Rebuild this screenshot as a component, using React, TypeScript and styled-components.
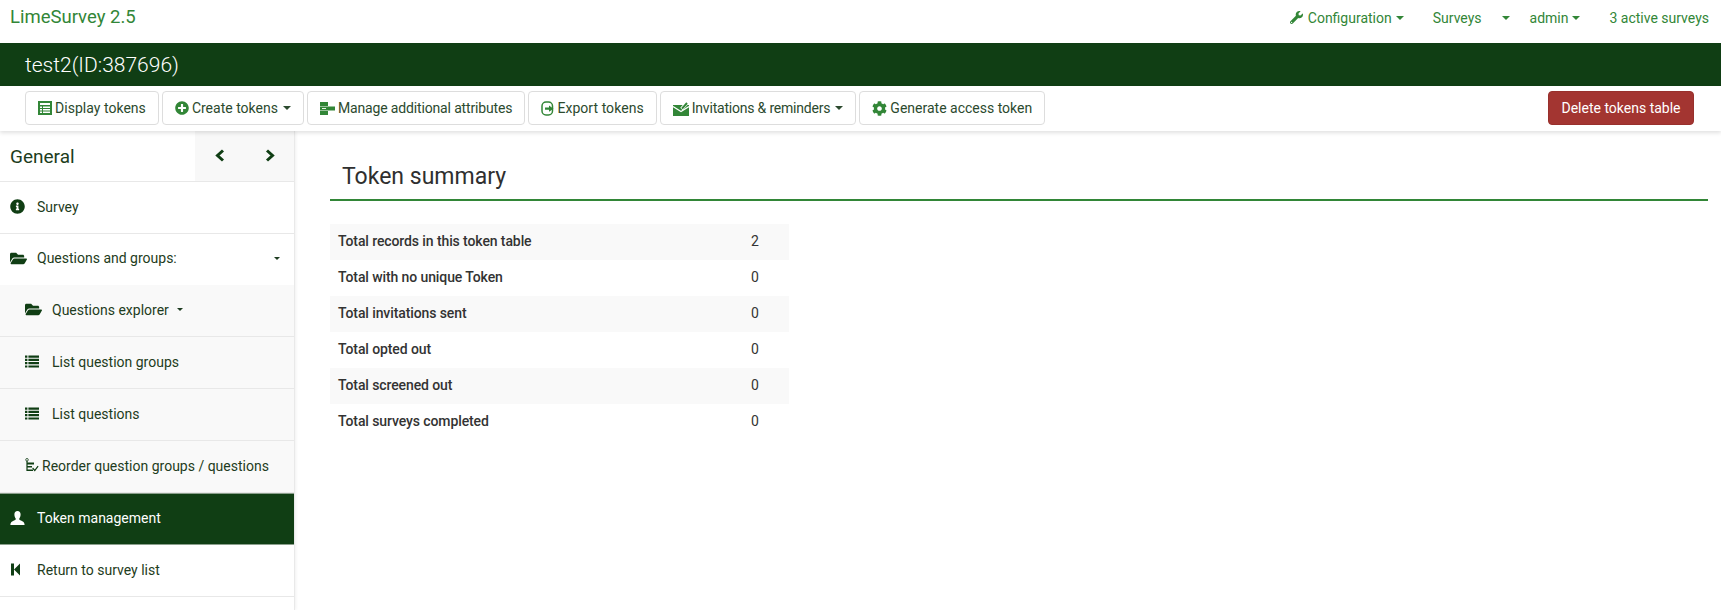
import React from 'react';
import styled, { createGlobalStyle } from 'styled-components';
import { FaWrench, FaPlusCircle, FaInfoCircle, FaFolderOpen, FaCog } from 'react-icons/fa';

const Global = createGlobalStyle`
  html, body { margin: 0; padding: 0; background: #fff; }
  body { font-family: Roboto, "Liberation Sans", sans-serif; font-size: 14px; color: #2d2d2d; }
  * { box-sizing: border-box; }
`;
const Page = styled.div`width: 1721px; height: 610px; overflow: hidden; display: flex; flex-direction: column;`;
const TopNav = styled.header`height: 43px; display: flex; align-items: center; justify-content: space-between; padding: 0 12px 8px 10px; color: #328637; background: #fff;`;
const Brand = styled.span`font-size: 18.5px; margin-bottom: 2px;`;
const NavLinks = styled.nav`display: flex; align-items: center; font-size: 14px;`;
const NavLink = styled.span<{ $ml: number }>`display: inline-flex; align-items: center; gap: 2px; margin-left: ${p => p.$ml}px; svg { margin-right: 3px; }`;
const Caret = styled.i<{ $ml?: number }>`display: inline-block; width: 0; height: 0; margin-left: ${p => p.$ml ?? 2}px; border-top: 4px solid currentColor; border-left: 4px solid transparent; border-right: 4px solid transparent;`;
const Band = styled.div`height: 43px; background: #103e14; color: #fff; font-size: 21px; font-weight: 300; display: flex; align-items: center; padding-left: 25px;`;
const Toolbar = styled.div`height: 45px; display: flex; align-items: center; padding: 0 27px 1px 25px; gap: 3px; box-shadow: 0 2px 4px rgba(0,0,0,.12); position: relative; background: #fff;`;
const ToolButton = styled.button<{ $ls?: number }>`height: 34px; padding: 0 12px; display: inline-flex; align-items: center; gap: 3px; background: #fff; border: 1px solid #ddd; border-radius: 4px; font: 14px Roboto, sans-serif; letter-spacing: ${p => p.$ls ?? 0}px; color: #2c4a2e; white-space: nowrap;
  svg { color: #328637; flex: none; }`;
const DangerButton = styled.button`height: 34px; width: 146px; margin-left: auto; background: #a33531; border: 1px solid #98302c; border-radius: 4px; color: #fff; font: 14px Roboto, sans-serif;`;
const Body = styled.div`flex: 1; display: flex; min-height: 0;`;
const Side = styled.aside`width: 295px; flex: none; border-right: 1px solid #e9e9e9; box-shadow: 1px 0 3px rgba(0,0,0,.06); color: #103e14;`;
const SideHead = styled.div`height: 51px; display: flex; border-bottom: 1px solid #e8e8e8;`;
const SideTitle = styled.div`flex: 1; padding-left: 10px; font-size: 19px; display: flex; align-items: center; color: #1d3d20;`;
const Arrows = styled.div`width: 99px; background: #f8f8f8; display: flex; align-items: center; justify-content: space-between; padding: 0 19px 2px 20px;`;
const Row = styled.div<{ $sub?: boolean; $active?: boolean; $plain?: boolean; $h?: number }>`
  height: ${p => p.$h ?? 52}px; display: flex; align-items: center; font-size: 14px;
  padding-left: ${p => p.$sub ? 25 : 10}px; padding-bottom: ${p => p.$active ? 3 : 2}px;
  background: ${p => p.$active ? '#103e14' : p.$sub ? '#f9f9f9' : '#fff'};
  color: ${p => p.$active ? '#fff' : '#1e3c21'};
  border-bottom: 1px solid ${p => p.$plain ? 'transparent' : p.$active ? '#8b9f8c' : '#e8e8e8'};
  ${p => p.$active ? 'border-top: 1px solid #8b9f8c;' : ''}
`;
const IconCell = styled.span<{ $w?: number }>`width: ${p => p.$w ?? 27}px; flex: none; display: inline-flex; align-items: center; color: #103e14;`;
const ActiveIcon = styled(IconCell)`color: #fff;`;
const RowCaret = styled(Caret)<{ $ml?: number }>`color: #1e3c21; border-width: 3.5px 3.5px 0;`;
const Main = styled.main`flex: 1; padding: 23px 13px 0 35px; min-width: 0; color: #333;`;
const Title = styled.h1`margin: 0; height: 47px; padding: 6px 0 0 12px; font-size: 23px; font-weight: 400; line-height: 34px; border-bottom: 2px solid #328637; color: #2f2f2f;`;
const Summary = styled.table`margin-top: 23px; width: 459px; border-collapse: collapse; font-size: 14px;`;
const SumRow = styled.tr`height: 36px; &:nth-child(odd) { background: #f9f9f9; }`;
const Label = styled.td`padding: 0 8px 2px; font-weight: 500; letter-spacing: -0.1px;`;
const Value = styled.td`width: 38px; padding: 0 0 2px;`;

const Gi = ({ children, w = 15, h = 15 }: { children: React.ReactNode; w?: number; h?: number }) => (
  <svg width={w} height={h} viewBox={`0 0 ${w} ${h}`} fill="currentColor">{children}</svg>
);
const DisplayIcon = () => <Gi w={14} h={14}><path fillRule="evenodd" d="M0 0h14v14H0zM2 2v2h10V2zM2 5.5v1.5h2V5.5zM5 5.5v1.5h7V5.5zM2 8v1.5h2V8zM5 8v1.5h7V8zM2 10.5V12h2v-1.5zM5 10.5V12h7v-1.5z"/></Gi>;
const AttrIcon = () => <Gi w={15} h={15}><path d="M0 1h8v4H0zM0 10h8v4H0zM0 5.6h15v3.8H0z"/><path d="M2 7.1h4v.9H2z" fill="#fff"/></Gi>;
const ExportIcon = () => <Gi w={13} h={15}><rect x="1" y="1" width="10.5" height="13" rx="4" fill="none" stroke="currentColor" strokeWidth="1.5"/><path d="M4 6.6h4V4.6L12.5 7.7 8 10.8V8.8H4z"/></Gi>;
const MailIcon = () => <Gi w={16} h={15}><path d="M0 4h16v11H0z"/><path d="M0 5.5 8 10.5 16 5.5" fill="none" stroke="#fff" strokeWidth="1.2"/><path d="M8.5 8 14 1.8" fill="none" stroke="#fff" strokeWidth="3.4"/><path d="M9 7.6 14 2" fill="none" stroke="currentColor" strokeWidth="2"/></Gi>;
const ReorderIcon = () => <Gi w={14} h={15}><circle cx="2" cy="1.8" r="1.3" fill="none" stroke="currentColor" strokeWidth=".8"/><path d="M1.4 3h1.2v10H1.4zM2.4 4.5H9v2H2.4zM2.4 8H7v1.6H2.4zM2.4 11.5H8V13H2.4z"/><path d="M8 9.5 9.8 11.4 12.6 7.8 13.6 8.6 9.8 13.4 7.2 10.6z"/></Gi>;
const ListIcon = () => <Gi w={14} h={13}><path d="M0 .5h2.4v2.2H0zM3.4.5H14v2.2H3.4zM0 3.8h2.4V6H0zM3.4 3.8H14V6H3.4zM0 7.1h2.4v2.2H0zM3.4 7.1H14v2.2H3.4zM0 10.4h2.4v2.2H0zM3.4 10.4H14v2.2H3.4z"/></Gi>;
const ChevronIcon = ({ right }: { right?: boolean }) => <Gi w={10} h={13}><path d={right ? 'M2 1.5 7.5 6.5 2 11.5' : 'M8 1.5 2.5 6.5 8 11.5'} fill="none" stroke="currentColor" strokeWidth="3"/></Gi>;
const UserIcon = () => <Gi w={15} h={14}><path d="M7.5 0C9.5 0 10.6 1.4 10.6 3.4 10.6 5.4 9.7 6.8 9.3 7.6 9 8.6 9.6 9 10.8 9.6 12.4 10.4 14.4 10.8 14.6 14H.4C.6 10.8 2.6 10.4 4.2 9.6 5.4 9 6 8.6 5.7 7.6 5.3 6.8 4.4 5.4 4.4 3.4 4.4 1.4 5.5 0 7.5 0z"/></Gi>;
const BackIcon = () => <Gi w={11} h={13}><path d="M1 .5h3v12H1zM4 6.5 10 .5v12z"/></Gi>;

const rows: [string, number][] = [
  ['Total records in this token table', 2],
  ['Total with no unique Token', 0],
  ['Total invitations sent', 0],
  ['Total opted out', 0],
  ['Total screened out', 0],
  ['Total surveys completed', 0],
];

export default function App() {
  return (
    <Page>
      <Global />
      <TopNav>
        <Brand>LimeSurvey 2.5</Brand>
        <NavLinks>
          <NavLink $ml={0}><FaWrench size={13} /><span>Configuration</span><Caret /></NavLink>
          <NavLink $ml={29}>Surveys</NavLink>
          <NavLink $ml={18}><Caret /></NavLink>
          <NavLink $ml={20}>admin<Caret /></NavLink>
          <NavLink $ml={29}>3 active surveys</NavLink>
        </NavLinks>
      </TopNav>
      <Band>test2(ID:387696)</Band>
      <Toolbar>
        <ToolButton $ls={0.03}><DisplayIcon />Display tokens</ToolButton>
        <ToolButton><FaPlusCircle size={14} />Create tokens<Caret /></ToolButton>
        <ToolButton $ls={-0.15}><AttrIcon />Manage additional attributes</ToolButton>
        <ToolButton $ls={0.05}><ExportIcon />Export tokens</ToolButton>
        <ToolButton $ls={-0.2}><MailIcon />Invitations &amp; reminders<Caret /></ToolButton>
        <ToolButton><FaCog size={15} />Generate access token</ToolButton>
        <DangerButton>Delete tokens table</DangerButton>
      </Toolbar>
      <Body>
        <Side>
          <SideHead>
            <SideTitle>General</SideTitle>
            <Arrows><ChevronIcon /><ChevronIcon right /></Arrows>
          </SideHead>
          <Row><IconCell><FaInfoCircle size={15} /></IconCell>Survey</Row>
          <Row $plain $h={51}><IconCell><FaFolderOpen size={17} /></IconCell>Questions and groups:<RowCaret $ml={97} /></Row>
          <Row $sub><IconCell><FaFolderOpen size={17} /></IconCell>Questions explorer<RowCaret $ml={8} /></Row>
          <Row $sub><IconCell><ListIcon /></IconCell>List question groups</Row>
          <Row $sub><IconCell><ListIcon /></IconCell>List questions</Row>
          <Row $sub><IconCell $w={17}><ReorderIcon /></IconCell>Reorder question groups / questions</Row>
          <Row $active><ActiveIcon><UserIcon /></ActiveIcon>Token management</Row>
          <Row><IconCell><BackIcon /></IconCell>Return to survey list</Row>
        </Side>
        <Main>
          <Title>Token summary</Title>
          <Summary>
            <tbody>
              {rows.map(([l, v]) => <SumRow key={l}><Label>{l}</Label><Value>{v}</Value></SumRow>)}
            </tbody>
          </Summary>
        </Main>
      </Body>
    </Page>
  );
}
